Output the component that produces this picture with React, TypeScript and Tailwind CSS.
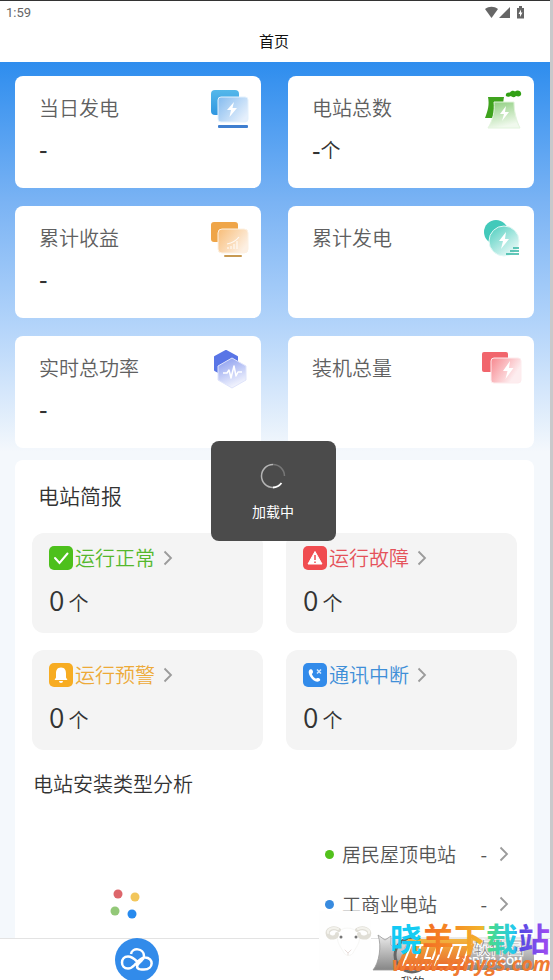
import type { ReactNode } from "react";

const BOLT = "M24 13l-7 10h4.500l-2 8 8-11h-4.500z";

function DailyIcon() {
  return (
    <svg viewBox="0 0 40 42" className="h-[42px] w-10" aria-hidden="true">
      <defs>
        <linearGradient id="dayBack" x1="0" y1="0" x2="0" y2="1">
          <stop offset="0" stopColor="#55b8ea" />
          <stop offset="1" stopColor="#2f96e0" />
        </linearGradient>
        <linearGradient id="dayFront" x1="0" y1="0" x2="1" y2="0.7">
          <stop offset="0" stopColor="#84bbef" />
          <stop offset="1" stopColor="#e6f0fc" />
        </linearGradient>
      </defs>
      <rect x="2" y="2" width="28" height="25" rx="4" fill="url(#dayBack)" />
      <rect x="9" y="9" width="30" height="25" rx="3" fill="url(#dayFront)" stroke="#e3f1fd" />
      <path d="M25 14l-7 8h4l-1.500 7 7.500-9h-4.500z" fill="#fff" />
      <rect x="9" y="37" width="30" height="3" rx="1" fill="#3f7fd0" />
    </svg>
  );
}

function StationIcon() {
  return (
    <svg viewBox="0 0 40 42" className="h-[42px] w-10" aria-hidden="true">
      <defs>
        <linearGradient id="tower" x1="0" y1="0" x2="0.3" y2="1">
          <stop offset="0" stopColor="#8ccd7c" />
          <stop offset="1" stopColor="#f0f9ed" />
        </linearGradient>
      </defs>
      <path d="M6 9h16c-1.500 8-1 13 2 21H3c3-8 4.500-13 3-21z" fill="#3fa31e" />
      <path d="M12 14h20c0 9 2 18 6 26H6c5-8 7-17 6-26z" fill="url(#tower)" stroke="#e2f4dd" />
      <path d="M24 18l-6 8h4l-2 7 7-9h-4z" fill="#fff" />
      <path d="M24 8c-1-3 2-4 4-3.500 1-2 4-2 5-1 2-2 6-1 6 1.500 1 3-2 4-5 3-2 2-4 1-5 0-2 1-4 1-5 0z" fill="#32a016" />
    </svg>
  );
}

function IncomeIcon() {
  return (
    <svg viewBox="0 0 40 42" className="h-[42px] w-10" aria-hidden="true">
      <defs>
        <linearGradient id="incomeFront" x1="0" y1="0" x2="1" y2="0.6">
          <stop offset="0" stopColor="#f8bd78" />
          <stop offset="1" stopColor="#fdf0e3" />
        </linearGradient>
      </defs>
      <rect x="2" y="4" width="27" height="20" rx="3" fill="#efa548" />
      <rect x="9" y="11" width="30" height="24" rx="4" fill="url(#incomeFront)" stroke="#fdf1e2" />
      <path d="M18 26c5-1 9-3 12-7M19 29v2M22 28v3M25 26v5M28 23v8" stroke="#fff" strokeWidth="1.200" fill="none" opacity="0.8" />
      <rect x="15" y="37" width="18" height="2" rx="1" fill="#c89a52" />
    </svg>
  );
}

function TotalIcon() {
  return (
    <svg viewBox="0 0 40 42" className="h-[42px] w-10" aria-hidden="true">
      <defs>
        <linearGradient id="totalFront" x1="0" y1="0" x2="0.8" y2="1">
          <stop offset="0" stopColor="#4bcdbd" />
          <stop offset="1" stopColor="#f0fbfa" />
        </linearGradient>
      </defs>
      <circle cx="14" cy="14" r="12" fill="#43c9ba" />
      <circle cx="22" cy="23" r="15" fill="url(#totalFront)" stroke="#e2f8f5" />
      <path d="M24 14l-7 9h4l-2 8 8-10h-4z" fill="#fff" />
      <path d="M31 30h6M28 33h9M24 36h13" stroke="#31b5a3" strokeWidth="1.500" />
    </svg>
  );
}

function PowerIcon() {
  return (
    <svg viewBox="0 0 40 42" className="h-[42px] w-10" aria-hidden="true">
      <defs>
        <linearGradient id="powerFront" x1="0" y1="0" x2="0.4" y2="1">
          <stop offset="0" stopColor="#8498ee" />
          <stop offset="1" stopColor="#f0f2fd" />
        </linearGradient>
      </defs>
      <path d="M17 3l11 6v13l-11 6-11-6V9z" fill="#5975e6" stroke="#5975e6" strokeWidth="2" strokeLinejoin="round" />
      <path d="M23 10l14 8v14l-14 8-14-8V18z" fill="url(#powerFront)" stroke="#dfe4fb" strokeLinejoin="round" />
      <path d="M14 25h4l2-3 2 8 3-12 2 10 2-4h4" stroke="#fff" strokeWidth="1.500" fill="none" strokeLinejoin="round" />
    </svg>
  );
}

function CapacityIcon() {
  return (
    <svg viewBox="0 0 42 42" className="h-[42px] w-[42px]" aria-hidden="true">
      <defs>
        <linearGradient id="capFront" x1="0" y1="0" x2="0.9" y2="0.5">
          <stop offset="0" stopColor="#f7878e" />
          <stop offset="1" stopColor="#fdedef" />
        </linearGradient>
      </defs>
      <rect x="2" y="4" width="26" height="20" rx="2" fill="#f1656c" />
      <rect x="11" y="10" width="30" height="25" rx="3" fill="url(#capFront)" stroke="#fdebed" />
      <path d={BOLT} transform="translate(6 0)" fill="#fff" />
    </svg>
  );
}

type Summary = { label: string; value: string; unit?: string; icon: ReactNode };

const summaries: Summary[] = [
  { label: "当日发电", value: "-", icon: <DailyIcon /> },
  { label: "电站总数", value: "-", unit: "个", icon: <StationIcon /> },
  { label: "累计收益", value: "-", icon: <IncomeIcon /> },
  { label: "累计发电", value: "", icon: <TotalIcon /> },
  { label: "实时总功率", value: "-", icon: <PowerIcon /> },
  { label: "装机总量", value: "", icon: <CapacityIcon /> },
];

function SummaryCard({ label, value, unit, icon }: Summary) {
  return (
    <section className="min-h-28 rounded-lg bg-white pt-3 pr-3 pl-6">
      <div className="flex justify-between">
        <h2 className="text-[20px] leading-10 text-[#606060]">{label}</h2>
        {icon}
      </div>
      <p className="flex items-center text-[20px] leading-10 text-[#333]">
        <span className="text-2xl leading-[38px] font-medium">{value}</span>
        {unit && <span>{unit}</span>}
      </p>
    </section>
  );
}

const statuses = [
  {
    label: "运行正常",
    text: "text-[#54b82c]",
    fill: "#4dc01c",
    mark: <path d="M6 12l4.500 5L18.500 7.500" fill="none" stroke="#fff" strokeWidth="2" strokeLinecap="round" />,
  },
  {
    label: "运行故障",
    text: "text-[#e5525a]",
    fill: "#f04c50",
    mark: (
      <>
        <path d="M12 5.500l7 12.500H5z" fill="#fff" stroke="#fff" strokeLinejoin="round" />
        <path d="M12 9v5M12 15.500v1.500" stroke="#f04c50" strokeWidth="1.500" />
      </>
    ),
  },
  {
    label: "运行预警",
    text: "text-[#edaa38]",
    fill: "#f7ac22",
    mark: <path d="M12 4.500c-4 0-5 3-5 6v4l-1.500 2.500h13L17 14.500v-4c0-3-1-6-5-6zM10 18a2 2 0 0 0 4 0z" fill="#fff" />,
  },
  {
    label: "通讯中断",
    text: "text-[#3f8fd8]",
    fill: "#328bea",
    mark: (
      <>
        <path d="M7 6.500c2-1 3 1 3 2.500s-1.500 1.500-1 2.500c1 2 2 3 3.500 4 1 .5 1.500-1 3-.5 1.500.5 2.500 2 1 3-3 2-7-.500-9-4-2-3-2.500-6.500-.5-7.500z" fill="#fff" />
        <path d="M14 6.500l4 4M18 6.500l-4 4" stroke="#d5e9ff" strokeWidth="1.500" />
      </>
    ),
  },
];

function Chevron() {
  return (
    <svg viewBox="0 0 10 18" className="h-[18px] w-2.5" aria-hidden="true">
      <path d="M1.500 2.500L8 9l-6.500 6.500" fill="none" stroke="#9b9b9b" strokeWidth="1.800" />
    </svg>
  );
}

const stationTypes = [
  { label: "居民屋顶电站", dot: "bg-[#52c11c]", value: "-" },
  { label: "工商业电站", dot: "bg-[#388bdf]", value: "-" },
];

function StatusBar() {
  return (
    <div className="flex h-6 items-center justify-between border-t border-[#333] pr-6 pl-1.5 text-[#666]">
      <span className="font-[Roboto,sans-serif] text-[13px] font-normal">1:59</span>
      <svg viewBox="0 0 42 14" className="h-3.5 w-[42px]" fill="#666" aria-hidden="true">
        <path d="M1 3c4-3 9-3 13 0L7.500 12z" />
        <path d="M26 1v11H15z" />
        <path d="M33 2h2V0h3v2h2v10.500h-7z" />
        <path d="M37 3.500l-2.500 4.500h1.500v3l2.500-4.500H37z" fill="#fff" />
      </svg>
    </div>
  );
}

function LoadingToast() {
  return (
    <div className="absolute inset-0 flex items-center justify-center pt-0.5 pr-1" role="status">
      <div className="flex h-[100px] w-[125px] flex-col items-center rounded-lg bg-[#4b4b4b] pt-[22px] text-white">
        <svg viewBox="0 0 26 26" className="h-[26px] w-[26px]" fill="none" aria-hidden="true">
          <path d="M21.500 20A11.500 11.500 0 0 1 13 24.500" stroke="#fff" strokeWidth="1.800" />
          <path d="M13 24.500A11.500 11.500 0 0 1 13 1.500" stroke="#b5b5b5" strokeWidth="1.500" />
          <path d="M13 1.500A11.500 11.500 0 0 1 24.500 13" stroke="#777" strokeWidth="1.500" />
        </svg>
        <span className="mt-3 text-sm leading-5 font-normal">加载中</span>
      </div>
    </div>
  );
}

function Watermark() {
  return (
    <svg viewBox="0 0 234 72" className="pointer-events-none absolute -right-[3px] bottom-0 h-[72px] w-[234px]">
      <defs>
        <linearGradient id="rainbow" gradientUnits="userSpaceOnUse" x1="71" y1="0" x2="231" y2="0">
          <stop offset="0" stopColor="#12c8f5" />
          <stop offset="0.19" stopColor="#16cdf2" />
          <stop offset="0.2" stopColor="#f26a25" />
          <stop offset="0.38" stopColor="#f58a24" />
          <stop offset="0.58" stopColor="#f3b52c" />
          <stop offset="0.6" stopColor="#50dd7a" />
          <stop offset="0.78" stopColor="#22c9f0" />
          <stop offset="0.8" stopColor="#4d4ae2" />
          <stop offset="1" stopColor="#a34cf2" />
        </linearGradient>
        <linearGradient id="metal" x1="0" y1="0" x2="0" y2="1">
          <stop offset="0" stopColor="#ececec" />
          <stop offset="1" stopColor="#868686" />
        </linearGradient>
        <linearGradient id="amber" x1="0" y1="0" x2="0" y2="1">
          <stop offset="0" stopColor="#f2b43e" />
          <stop offset="1" stopColor="#e8632a" />
        </linearGradient>
      </defs>
      <rect x="0" y="3" width="52" height="59" fill="#fefefe" />
      <path d="M59 27l7 5 6-4v9l5 4v21H54c6-7 9-24 5-35z" fill="url(#metal)" stroke="#999" strokeWidth="0.800" />
      <rect x="74" y="29" width="141" height="33" rx="3" fill="url(#metal)" />
      <circle cx="93" cy="47" r="17" fill="none" stroke="#666" strokeWidth="3" />
      <path d="M89 31h68l-10 31H77z" fill="url(#amber)" />
      <g fill="none" stroke="#fff" strokeWidth="2">
        <path d="M92 37h27l-8 20H84zM102 37l-5 13M110 37l-4 13h6" />
        <path d="M124 37h27l-8 20h-27zM134 37l-5 13M142 37l-4 13h6" />
      </g>
      <text x="154" y="46" fontSize="17" fontWeight="700" fill="#888" stroke="#fff" strokeWidth="0.800" className="font-['Noto_Sans_CJK_SC',sans-serif]">软件园</text>
      <text x="146" y="57" fontSize="10" fontWeight="700" fill="#fff" className="font-['Liberation_Sans',sans-serif]">CR173.COM</text>
      <path d="M19 25c3-6 14-7 21 0 2 9-2 13-5 18-2 6-9 6-11 0-3-5-7-9-5-18z" fill="#fff" stroke="#f7f7f5" />
      <g fill="none" strokeLinecap="round">
        <path d="M20 22c-6-4-13 0-11 5 2 4 9 3 9-1" stroke="#e0ded6" strokeWidth="4" />
        <path d="M38 22c6-4 14 0 12 5-2 4-10 3-10-1" stroke="#e0ded6" strokeWidth="4" />
        <path d="M19 21c-6-3-11 1-10 4M39 21c6-3 12 1 11 4" stroke="#f3f2ec" strokeWidth="2" />
        <path d="M26 42l3 3 3-3M29 45v2" stroke="#e8dedb" />
      </g>
      <circle cx="22" cy="29" r="1.500" fill="#777" />
      <circle cx="37" cy="29" r="1.500" fill="#777" />
      <text x="71" y="43" fontSize="32" fontWeight="700" fill="url(#rainbow)" className="font-['Noto_Sans_CJK_SC',sans-serif]">晓羊下载站</text>
      <text x="73" y="63" fontSize="20" fontWeight="700" fontStyle="italic" fill="#f07b32" className="font-['Open_Sans',sans-serif]">www.xfhygs.com</text>
    </svg>
  );
}

export default function App() {
  return (
    <div className="relative flex h-screen flex-col overflow-hidden border-r-[3px] border-[#c9c9cb] bg-white font-['Noto_Sans_CJK_SC',sans-serif] font-[350]">
      <header>
        <StatusBar />
        <h1 className="h-[38px] pr-0.5 text-center text-[15px] leading-[34px] font-normal text-[#111]">首页</h1>
      </header>

      <main className="flex min-h-0 flex-1 flex-col overflow-hidden bg-[#f4f8fc] bg-[linear-gradient(180deg,#2e8dee_0px,#7ab3f4_140px,#b3d4fa_264px,#f4f8fc_390px)] bg-no-repeat pt-3.5 pr-4 pl-[15px]">
        <div className="grid shrink-0 grid-cols-2 gap-x-[27px] gap-y-[18px]">
          {summaries.map((item) => (
            <SummaryCard key={item.label} {...item} />
          ))}
        </div>

        <div className="mt-3 flex-1 rounded-t-lg bg-white px-[17px] pt-[19px]">
          <h2 className="pl-1.5 text-[21px] leading-8 text-[#333]">电站简报</h2>
          <div className="mt-[22px] grid grid-cols-2 gap-x-[23px] gap-y-[17px]">
            {statuses.map((s) => (
              <button key={s.label} type="button" className="h-[100px] rounded-xl bg-[#f4f4f4] px-[17px] pt-1 text-left">
                <span className={`flex h-8 items-center text-[20px] ${s.text}`}>
                  <svg viewBox="0 0 24 24" className="mr-0.5 h-6 w-6" aria-hidden="true">
                    <rect width="24" height="24" rx="5" fill={s.fill} />
                    {s.mark}
                  </svg>
                  {s.label}
                  <span className="ml-2">
                    <Chevron />
                  </span>
                </span>
                <span className="flex items-baseline gap-1 text-[20px] leading-[50px] text-[#333]">
                  <span className="text-[28px]">0</span>个
                </span>
              </button>
            ))}
          </div>

          <h2 className="mt-[18px] pl-px text-[20px] leading-8 text-[#333]">电站安装类型分析</h2>
          <div className="mt-[29px] flex items-center">
            <div className="flex-1 pt-[50px] pl-[77px]">
              <svg viewBox="0 0 32 32" className="h-8 w-8" role="img" aria-label="图表加载中">
                <circle cx="9" cy="6" r="4.500" fill="#dd666b" />
                <circle cx="26" cy="9" r="4.500" fill="#f2c65b" />
                <circle cx="6" cy="23" r="4.500" fill="#93c878" />
                <circle cx="23" cy="26" r="4.500" fill="#278aee" />
              </svg>
            </div>
            <ul className="w-[192px]">
              {stationTypes.map((t) => (
                <li key={t.label}>
                  <button type="button" className="flex h-[50px] w-full items-center pr-2 text-[19px] text-[#555]">
                    <span className={`mr-2 h-[9px] w-[9px] rounded-full ${t.dot}`} />
                    {t.label}
                    <span className="mr-3 ml-auto font-normal">{t.value}</span>
                    <Chevron />
                  </button>
                </li>
              ))}
            </ul>
          </div>
        </div>
      </main>

      <nav className="grid h-[42px] shrink-0 grid-cols-2 items-start border-t border-[#e3e3e3] bg-white">
        <button type="button" aria-label="首页" className="-mt-px justify-self-center pr-0.5">
          <svg viewBox="0 0 44 44" className="h-11 w-11" aria-hidden="true">
            <circle cx="22" cy="22" r="22" fill="#328bea" />
            <path
              d="M16 16c1-7 13-6 13 2 0 2-.500 3-2 4l-3 3c-2 2-3 5 0 6 2 1 3 .5 5 .5 10 0 10-12 1-12-4 0-6 3-9 6s-4 5-8 5c-8 0-8-12 0-12 4 0 6 2 9 5"
              fill="none"
              stroke="#fff"
              strokeWidth="2.500"
              strokeLinejoin="round"
            />
          </svg>
        </button>
        <button type="button" className="justify-self-center pt-[35px] text-xs leading-4 text-[#333]">
          我的
        </button>
      </nav>

      <LoadingToast />
      <Watermark />
    </div>
  );
}
